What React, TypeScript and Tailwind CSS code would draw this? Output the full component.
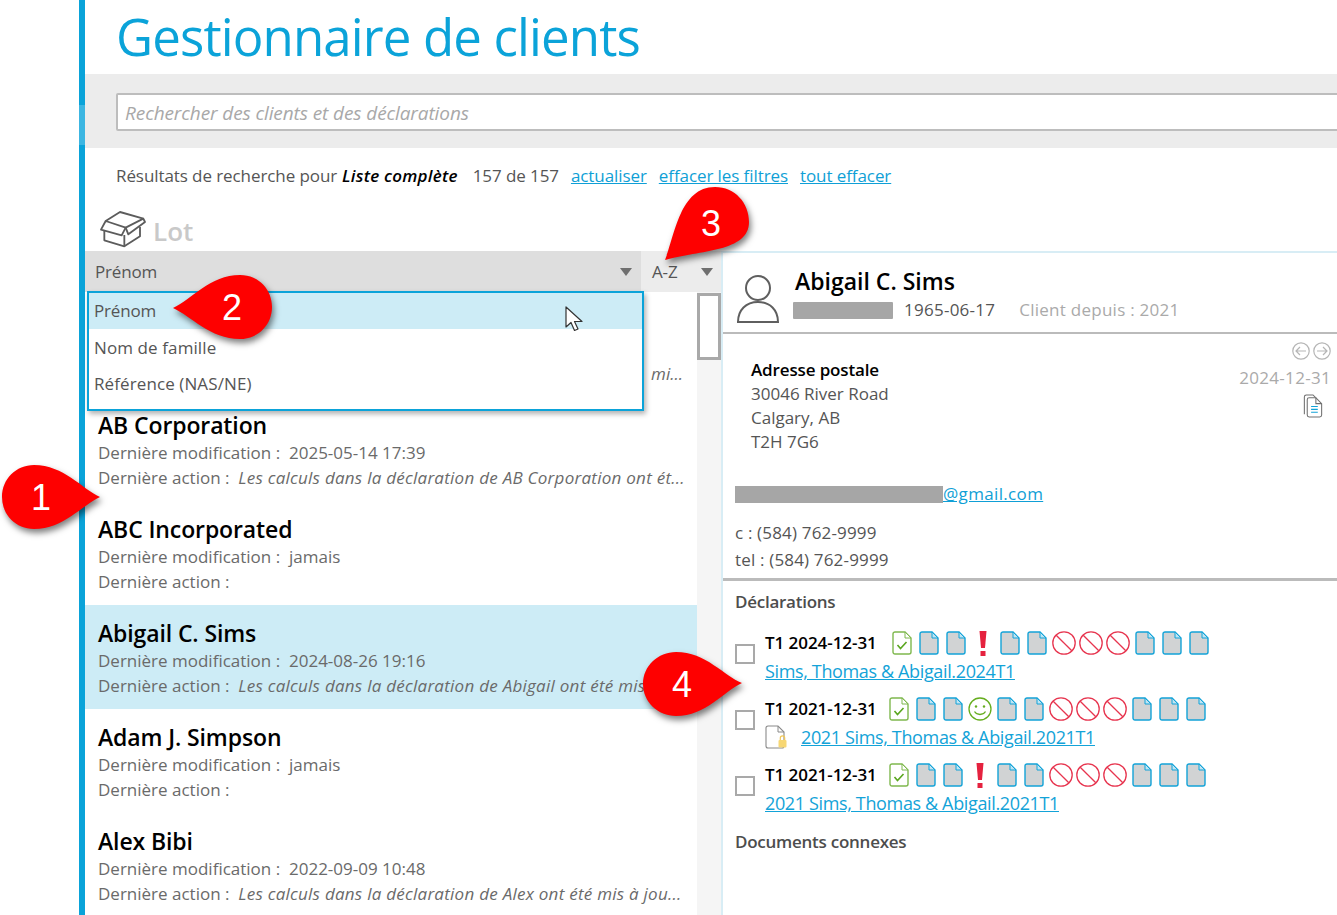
import React from 'react';

type Slot = 'ok' | 'file' | 'alert' | 'smile' | 'no';

const clients = [
  { name: 'AB Corporation', modified: '2025-05-14 17:39', action: 'Les calculs dans la déclaration de AB Corporation ont ét...' },
  { name: 'ABC Incorporated', modified: 'jamais', action: '' },
  { name: 'Abigail C. Sims', modified: '2024-08-26 19:16', action: 'Les calculs dans la déclaration de Abigail ont été mis à jou...', selected: true },
  { name: 'Adam J. Simpson', modified: 'jamais', action: '' },
  { name: 'Alex Bibi', modified: '2022-09-09 10:48', action: 'Les calculs dans la déclaration de Alex ont été mis à jou...' },
];

const makeSlots = (fourth: Slot): Slot[] => ['ok', 'file', 'file', fourth, 'file', 'file', 'no', 'no', 'no', 'file', 'file', 'file'];

const returns = [
  { title: 'T1 2024-12-31', link: 'Sims, Thomas & Abigail.2024T1', slots: makeSlots('alert') },
  { title: 'T1 2021-12-31', link: '2021 Sims, Thomas & Abigail.2021T1', slots: makeSlots('smile'), locked: true },
  { title: 'T1 2021-12-31', link: '2021 Sims, Thomas & Abigail.2021T1', slots: makeSlots('alert') },
];

const FileIcon = ({ green }: { green?: boolean }) => (
  <svg width="20" height="24" viewBox="0 0 20 24" fill="none">
    <path
      d="M1 3a2 2 0 0 1 2-2h10l6 6v14a2 2 0 0 1-2 2H3a2 2 0 0 1-2-2z"
      fill={green ? '#ffffff' : '#d1d3d4'}
      stroke={green ? '#7fb84e' : '#13a3d8'}
      strokeWidth="1.4"
    />
    <path d="M13 1v6h6z" fill={green ? '#ffffff' : '#bfe4f3'} stroke={green ? '#7fb84e' : '#13a3d8'} strokeWidth="1" />
    {green && <path d="M5.5 14l3 3.5 6-6.5" stroke="#5aa61f" strokeWidth="1.6" />}
  </svg>
);

const StatusIcon = ({ type }: { type: Slot }) => {
  if (type === 'ok') return <FileIcon green />;
  if (type === 'file') return <FileIcon />;
  if (type === 'alert') {
    return (
      <svg width="10" height="25" viewBox="0 0 10 25">
        <path d="M1.5 0h7L7 17H3z" fill="#e5223f" />
        <rect x="2.5" y="20" width="5" height="5" fill="#e5223f" />
      </svg>
    );
  }
  if (type === 'smile') {
    return (
      <svg width="24" height="24" viewBox="0 0 24 24" fill="none" stroke="#66ad1e" strokeWidth="1.3">
        <circle cx="12" cy="12" r="11" />
        <circle cx="8" cy="9.5" r="1.2" fill="#66ad1e" stroke="none" />
        <circle cx="16" cy="9.5" r="1.2" fill="#66ad1e" stroke="none" />
        <path d="M6.5 14.5c2.5 4 8.500 4 11 0" />
      </svg>
    );
  }
  return (
    <svg width="24" height="24" viewBox="0 0 24 24" fill="none" stroke="#e7354f" strokeWidth="1.3">
      <circle cx="12" cy="12" r="11.200" />
      <path d="M4.200 4.200l15.600 15.600" />
    </svg>
  );
};

const LockedFile = () => (
  <svg width="22" height="25" viewBox="0 0 22 25" fill="none">
    <path d="M1 3a2 2 0 0 1 2-2h10l6 6v14a2 2 0 0 1-2 2H3a2 2 0 0 1-2-2z" fill="#fff" stroke="#8a8a8a" strokeWidth="1.1" />
    <path d="M13 1v6h6" stroke="#8a8a8a" strokeWidth="1" />
    <rect x="13.500" y="15" width="8" height="7.500" rx="1" fill="#f7d774" />
    <path d="M15.300 15v-2a2.200 2.200 0 0 1 4.400 0v2" stroke="#f0c75a" strokeWidth="1.200" />
  </svg>
);

const Caret = () => (
  <svg width="12" height="8" viewBox="0 0 12 8">
    <path d="M0 0h12L6 8z" fill="#6f6f6f" />
  </svg>
);

// traced on a 3x grid, hence the large viewBox
const BoxIcon = () => (
  <svg width="60" height="42" viewBox="0 0 180 126" fill="none" stroke="#5c5c5c" strokeWidth="5.500" strokeLinejoin="round">
    <path d="M32 42L75 15l70 20" />
    <path d="M18 68l14-26 60 20-12 23z" />
    <path d="M92 62l8 20 50-37-5-10z" />
    <path d="M28 72v28l60 18 47-30V60" />
    <path d="M88 118V84" />
  </svg>
);

const PersonIcon = () => (
  <svg width="44" height="48" viewBox="0 0 44 48" fill="none" stroke="#5f5f5f" strokeWidth="2">
    <circle cx="22" cy="13" r="12" />
    <path d="M2 47c0-12 8-20 20-20s20 8 20 20z" />
  </svg>
);

const CircleArrow = ({ right }: { right?: boolean }) => (
  <svg width="18" height="18" viewBox="0 0 18 18" fill="none" stroke="#b5b5b5" strokeWidth="1.200">
    <circle cx="9" cy="9" r="8.200" />
    {right ? <path d="M4 9h10M10 5l4 4-4 4" /> : <path d="M14 9H4M8 5L4 9l4 4" />}
  </svg>
);

const DocsIcon = () => (
  <svg width="20" height="24" viewBox="0 0 20 25" fill="none" stroke="#707070" strokeWidth="1.100">
    <path d="M1 21V3a2 2 0 0 1 2-2h7l3 3" />
    <path d="M4 6a2 2 0 0 1 2-2h7l6 6v12a2 2 0 0 1-2 2H6a2 2 0 0 1-2-2z" fill="#fff" />
    <path d="M13 4v6h6" />
    <path d="M8 13h7M8 16h7M8 19h7" stroke="#13a3d8" strokeWidth="1.200" />
  </svg>
);

const Pointer = () => (
  <svg className="absolute left-[564px] top-[306px]" width="22" height="28" viewBox="0 0 22 28">
    <path d="M2 1v20l5-4.500 3.500 8 3.500-1.500-3.500-7.500H18z" fill="#fff" stroke="#333" strokeWidth="1.200" strokeLinejoin="round" />
  </svg>
);

const drop = 'absolute overflow-visible drop-shadow-[2px_4px_3px_rgba(0,0,0,0.5)]';
const numeral = "absolute font-['Liberation_Sans',Arial,sans-serif] text-[36px] leading-none text-white";

const Callouts = () => (
  <>
    <svg className={`${drop} left-[2px] top-[465px]`} width="98" height="64" viewBox="0 0 98 64">
      <path d="M98 32C80 24 62 0 32 0 14 0 0 14 0 32s14 32 32 32c30 0 48-24 66-32z" fill="#fe0000" />
    </svg>
    <span className={`${numeral} left-[31px] top-[480px]`}>1</span>

    <svg className={`${drop} left-[173px] top-[275px]`} width="99" height="64" viewBox="0 0 99 64">
      <path d="M0 33C18 25 37 0 67 0c18 0 32 14 32 32S85 64 67 64C37 64 18 41 0 33z" fill="#fe0000" />
    </svg>
    <span className={`${numeral} left-[222px] top-[290px]`}>2</span>

    <svg className={`${drop} left-[665px] top-[187px]`} width="84" height="73" viewBox="0 0 84 73">
      <path d="M0 73C10 48 15 0 50 0c20 0 34 16 34 35C84 65 35 63 0 73z" fill="#fe0000" />
    </svg>
    <span className={`${numeral} left-[701px] top-[206px]`}>3</span>

    <svg className={`${drop} left-[643px] top-[652px]`} width="99" height="64" viewBox="0 0 99 64">
      <path d="M99 31C81 24 63 0 33 0 15 0 0 14 0 32s15 32 33 32c30 0 48-25 66-33z" fill="#fe0000" />
    </svg>
    <span className={`${numeral} left-[672px] top-[667px]`}>4</span>
  </>
);

const ClientRow = ({ client }: { client: (typeof clients)[number] }) => (
  <div className={`h-[104px] pl-[13px] pt-[12px] whitespace-nowrap ${client.selected ? 'bg-[#cdecf6]' : ''}`}>
    <div className="text-[23px] leading-[33px] font-semibold text-black tracking-[-0.005em]">{client.name}</div>
    <div className="text-[17px] leading-[21px] text-[#6a6a6a]">Dernière modification :&nbsp; {client.modified}</div>
    <div className="text-[17px] leading-[30px] text-[#6a6a6a]">
      Dernière action :&nbsp; <em className="tracking-[0.015em]">{client.action}</em>
    </div>
  </div>
);

const ReturnRow = ({ item, shift }: { item: (typeof returns)[number]; shift?: boolean }) => (
  <div className="flex h-[66px] items-center gap-[10px]">
    <span className="mb-[6px] h-[20px] w-[20px] border-2 border-[#a9a9a9] bg-white" />
    <div>
      <div className="flex h-[28px] items-center">
        <span className={`text-[17px] font-semibold text-black tracking-[-0.003em] ${shift ? 'w-[120px]' : 'w-[123px]'}`}>{item.title}</span>
        <div className="flex">
          {item.slots.map((slot, i) => (
            <span key={i} className="flex h-[26px] w-[27px] items-center justify-center">
              <StatusIcon type={slot} />
            </span>
          ))}
        </div>
      </div>
      <div className="flex h-[28px] items-center gap-[14px]">
        {item.locked && <LockedFile />}
        <span className="text-[18px] text-[#13a3d8] underline tracking-[-0.02em]">{item.link}</span>
      </div>
    </div>
  </div>
);

export default function App() {
  return (
    <div className="relative flex h-[915px] w-[1337px] overflow-hidden bg-white font-['Open_Sans','Noto_Sans',sans-serif] text-[#555]">
      <div className="w-[79px] shrink-0" />
      <div className="flex w-[6px] shrink-0 flex-col bg-[#0aa3d9]">
        <div className="h-[105px]" />
        <div className="h-[40px] bg-[#3cb6e2]" />
      </div>
      <div className="flex min-w-0 flex-1 flex-col">
        <div className="h-[74px] pl-[31px] text-[51px] leading-[72px] text-[#0ba3d9] tracking-[-0.017em] whitespace-nowrap">Gestionnaire de clients</div>

        <div className="h-[74px] bg-[#ececec] pl-[31px] pt-[19px]">
          <input
            readOnly
            placeholder="Rechercher des clients et des déclarations"
            className="h-[38px] w-[1300px] rounded-[2px] border-2 border-[#bdbdbd] bg-white pl-[7px] pt-[2px] text-[19px] italic tracking-[-0.005em] placeholder:text-[#a8a8a8]"
          />
        </div>

        <div className="flex h-[57px] items-center pb-[2px] pl-[31px] text-[17px] tracking-[-0.005em] whitespace-nowrap">
          <span>Résultats de recherche pour</span>
          <span className="ml-[5px] font-semibold italic text-black tracking-[0.014em]">Liste complète</span>
          <span className="ml-[15px]">157 de 157</span>
          <a className="ml-[12px] text-[#0f9fd6] underline">actualiser</a>
          <a className="ml-[12px] text-[#0f9fd6] underline">effacer les filtres</a>
          <a className="ml-[12px] text-[#0f9fd6] underline">tout effacer</a>
        </div>

        <div className="flex h-[46px] items-center pl-[10px]">
          <BoxIcon />
          <span className="-ml-[2px] mt-[6px] text-[26px] font-semibold text-[#c9c9c9]">Lot</span>
        </div>

        <div className="flex min-h-0 flex-1">
          <div className="relative w-[636px] shrink-0">
            <div className="flex h-[41px] items-center text-[17px] tracking-[-0.01em]">
              <div className="flex h-full w-[556px] items-center justify-between bg-[#dedede] pl-[10px] pr-[9px]">
                Prénom
                <Caret />
              </div>
              <div className="flex h-full w-[80px] items-center justify-between bg-[#ececec] pl-[11px] pr-[8px]">
                A-Z
                <Caret />
              </div>
            </div>
            <div className="flex">
              <div className="w-[612px]">
                <div className="flex h-[105px] items-end justify-end pb-[11px] pr-[14px] text-[17px] italic text-[#6a6a6a]">mi...</div>
                {clients.map((client) => (
                  <ClientRow key={client.name} client={client} />
                ))}
              </div>
              <div className="h-[640px] w-[24px] bg-[#f5f5f5] pt-px">
                <div className="h-[67px] border-[3px] border-[#a9a9a9] bg-white" />
              </div>
            </div>

            <div className="absolute left-[2px] top-[40px] h-[120px] w-[557px] border-2 border-[#0ba3d9] bg-white text-[17px] tracking-[0.006em] shadow-[2px_3px_5px_rgba(0,0,0,0.3)]">
              <div className="flex h-[36px] items-center bg-[#cdecf6] pl-[5px] tracking-[-0.01em]">Prénom</div>
              <div className="flex h-[37px] items-center pl-[5px]">Nom de famille</div>
              <div className="flex h-[36px] items-center pl-[5px]">Référence (NAS/NE)</div>
            </div>
          </div>

          <div className="min-w-0 flex-1 border-l-2 border-t-2 border-[#d8edf5]">
            <div className="flex h-[81px] border-b-2 border-[#bbbbbb] pl-[13px] pt-[22px]">
              <PersonIcon />
              <div className="ml-[15px] -mt-[11px]">
                <div className="text-[23px] leading-[34px] font-semibold text-black">Abigail C. Sims</div>
                <div className="flex items-center text-[17px] leading-[24px] tracking-[0.015em]">
                  <span className="-ml-[2px] h-[17px] w-[100px] rounded-[1px] bg-[#a6a6a6]" />
                  <span className="ml-[11px]">1965-06-17</span>
                  <span className="ml-[24px] text-[#aaaaaa]">Client depuis : 2021</span>
                </div>
              </div>
            </div>

            <div className="h-[247px] border-b-[3px] border-[#bbbbbb] pl-[12px] pr-[6px] text-[17px]">
              <div className="flex justify-between">
                <div className="pl-[16px] pt-[24px] leading-[24px]">
                  <div className="font-semibold text-black tracking-[-0.008em]">Adresse postale</div>
                  <div>30046 River Road</div>
                  <div>Calgary, AB</div>
                  <div>T2H 7G6</div>
                </div>
                <div className="flex flex-col items-end pt-[8px]">
                  <div className="flex gap-[3px]">
                    <CircleArrow />
                    <CircleArrow right />
                  </div>
                  <div className="mt-[5px] text-[#aaaaaa] tracking-[0.018em]">2024-12-31</div>
                  <div className="mr-[8px] mt-[3px]">
                    <DocsIcon />
                  </div>
                </div>
              </div>
              <div className="mt-[28px] flex h-[24px] items-center">
                <span className="h-[17px] w-[208px] bg-[#a6a6a6]" />
                <span className="text-[#0f9fd6] underline tracking-[0.02em]">@gmail.com</span>
              </div>
              <div className="mt-[13px] leading-[27px] tracking-[0.01em]">
                <div>c : (584) 762-9999</div>
                <div>tel : (584) 762-9999</div>
              </div>
            </div>

            <div className="pl-[12px]">
              <div className="pt-[9px] text-[17px] leading-[24px] font-semibold text-[#4d4d4d] tracking-[-0.015em]">Déclarations</div>
              <div className="mt-[10px]">
                {returns.map((item, i) => (
                  <ReturnRow key={i} item={item} shift={i > 0} />
                ))}
              </div>
              <div className="mt-[8px] text-[17px] leading-[24px] font-semibold text-[#4d4d4d] tracking-[-0.015em]">Documents connexes</div>
            </div>
          </div>
        </div>
      </div>
      <Pointer />
      <Callouts />
    </div>
  );
}
